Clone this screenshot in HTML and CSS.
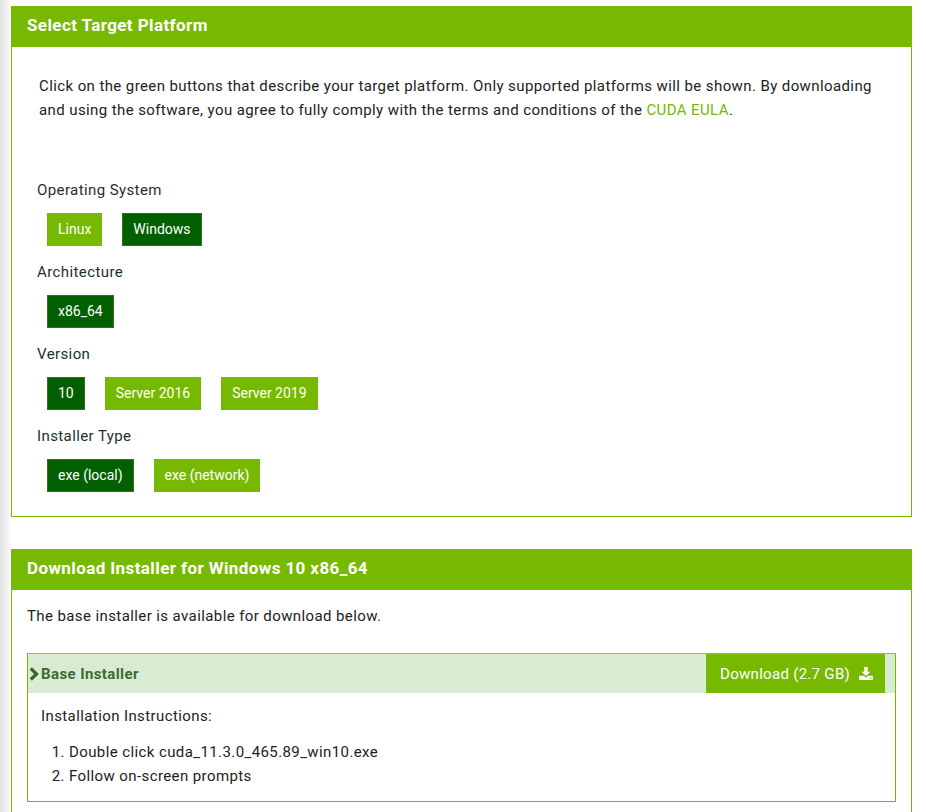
FILE: index.html
```html
<!DOCTYPE html>
<html lang="en">
<head>
    <meta charset="UTF-8">
    <meta name="viewport" content="width=device-width, initial-scale=1.0">
    <title>CUDA Toolkit Downloads</title>
    <link rel="stylesheet" href="styles.css">
</head>
<body>
    <!-- Choix de la plateforme -->
    <div class="panel">
        <div class="panel-header">Select Target Platform</div>
        <div class="panel-body platform-body">
            <p class="intro">
                Click on the green buttons that describe your target platform. Only supported platforms will be shown. By downloading and using the software, you agree to fully comply with the terms and conditions of the <a href="#" class="eula">CUDA EULA</a>.
            </p>

            <div class="option-group">
                <div class="option-label">Operating System</div>
                <div class="option-buttons">
                    <span class="opt-btn">Linux</span>
                    <span class="opt-btn active">Windows</span>
                </div>
            </div>

            <div class="option-group">
                <div class="option-label">Architecture</div>
                <div class="option-buttons">
                    <span class="opt-btn active">x86_64</span>
                </div>
            </div>

            <div class="option-group">
                <div class="option-label">Version</div>
                <div class="option-buttons">
                    <span class="opt-btn active">10</span>
                    <span class="opt-btn">Server 2016</span>
                    <span class="opt-btn">Server 2019</span>
                </div>
            </div>

            <div class="option-group">
                <div class="option-label">Installer Type</div>
                <div class="option-buttons">
                    <span class="opt-btn active">exe (local)</span>
                    <span class="opt-btn">exe (network)</span>
                </div>
            </div>
        </div>
    </div>

    <!-- Téléchargement -->
    <div class="panel">
        <div class="panel-header">Download Installer for Windows 10 x86_64</div>
        <div class="panel-body download-body">
            <p class="download-note">The base installer is available for download below.</p>

            <div class="installer">
                <div class="installer-head">
                    <div class="installer-title">
                        <svg class="chevron" width="10" height="14" viewBox="0 0 10 14">
                            <path d="M1.8 1.5 L7.5 7 L1.8 12.5" fill="none" stroke="#35652f" stroke-width="3.2"/>
                        </svg>
                        Base Installer
                    </div>
                    <a href="#" class="download-btn">
                        Download (2.7 GB)
                        <svg width="16" height="15" viewBox="0 0 16 15">
                            <path d="M6 0 H10 V5.5 H13 L8 10.5 L3 5.5 H6 Z" fill="#fff"/>
                            <path d="M0 10 H5.5 L8 12.5 L10.5 10 H16 V15 H0 Z" fill="#fff"/>
                            <rect x="12" y="12" width="1.2" height="1.2" fill="#76b900"/>
                            <rect x="14" y="12" width="1.2" height="1.2" fill="#76b900"/>
                        </svg>
                    </a>
                </div>
                <div class="installer-body">
                    <p>Installation Instructions:</p>
                    <ol>
                        <li>Double click cuda_11.3.0_465.89_win10.exe</li>
                        <li>Follow on-screen prompts</li>
                    </ol>
                </div>
            </div>
        </div>
    </div>
</body>
</html>
```

FILE: styles.css
```css
/* Reset de base */
* {
    margin: 0;
    padding: 0;
    box-sizing: border-box;
}

body {
    font-family: 'Roboto', 'Liberation Sans', sans-serif;
    color: #222;
    letter-spacing: 0.4px;
    background: linear-gradient(to right, #e2e2e2 0, #f7f7f7 9px, #fff 11px) no-repeat;
    background-color: #fff;
    min-height: 812px;
    padding: 6px 14px 0 11px;
    overflow: hidden;
}

/* Panneaux */
.panel {
    border: 1px solid #76b900;
    margin-bottom: 32px;
}

.panel-header {
    background-color: #76b900;
    color: #fff;
    font-size: 17px;
    font-weight: 700;
    height: 41px;
    line-height: 38px;
    margin: -1px -1px 0 -1px;
    padding: 0 15px 0 16px;
}

.platform-body {
    padding: 27px 27px 24px 27px;
}

.intro {
    font-size: 15px;
    line-height: 24px;
    margin-bottom: 58px;
}

.eula {
    color: #76b900;
    text-decoration: none;
}

/* Groupes d'options */
.option-group {
    margin-left: -2px;
    margin-bottom: 16px;
}

.option-group:last-child {
    margin-bottom: 0;
}

.option-label {
    font-size: 15px;
    line-height: 20px;
    color: #1d2f33;
    margin-bottom: 13px;
}

.option-buttons {
    display: flex;
    gap: 20px;
    padding-left: 10px;
}

.opt-btn {
    display: inline-block;
    height: 33px;
    line-height: 31px;
    padding: 0 10px;
    font-size: 14px;
    letter-spacing: 0;
    color: #fff;
    background-color: #76b900;
    border: 1px solid #76b900;
}

.opt-btn.active {
    background-color: #006000;
    border-color: #3d6e10;
}

/* Section téléchargement */
.download-body {
    padding: 14px 15px 0 15px;
    min-height: 260px;
}

.download-note {
    font-size: 15px;
    line-height: 24px;
    margin-bottom: 25px;
}

.installer {
    border: 1px solid #76b900;
    border-top-color: #8cc24a;
}

.installer-head {
    display: flex;
    justify-content: space-between;
    align-items: stretch;
    background-color: #d9ebd3;
    height: 39px;
    padding-right: 10px;
}

.installer-title {
    display: flex;
    align-items: center;
    gap: 2px;
    font-size: 15px;
    font-weight: 700;
    color: #3a6b34;
    padding-left: 1px;
}

.download-btn {
    display: flex;
    align-items: center;
    gap: 9px;
    white-space: nowrap;
    background-color: #76b900;
    color: #fff;
    text-decoration: none;
    font-size: 15px;
    letter-spacing: 0.3px;
    padding: 0 12px 0 14px;
    width: 179px;
}

.installer-body {
    padding: 11px 13px 13px 13px;
    font-size: 15px;
    line-height: 24px;
}

.installer-body p {
    margin-bottom: 12px;
}

.installer-body ol {
    padding-left: 28px;
}
```
